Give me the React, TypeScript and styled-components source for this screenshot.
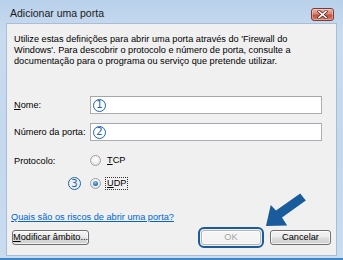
import React from 'react';
import styled, { createGlobalStyle } from 'styled-components';

const Global = createGlobalStyle`
  html, body { margin: 0; padding: 0; width: 343px; height: 260px; overflow: hidden; background: #fff; }
  #root { width: 343px; height: 260px; }
  * { box-sizing: border-box; }
`;

const FS = '9.2px';

const Window = styled.div`
  position: relative;
  width: 343px;
  height: 260px;
  display: flex;
  flex-direction: column;
  background: linear-gradient(180deg, #b8d0ea 0%, #c8dbef 12%, #c4d8ee 60%, #c9dcf0 100%);
  border-bottom: 2px solid #3f86c4;
  font-family: "Liberation Sans", Arial, sans-serif;
  color: #000;
`;

const TitleBar = styled.div`
  height: 23px;
  flex: none;
  display: flex;
  align-items: center;
  justify-content: space-between;
  padding: 2px 9px 0 10px;
`;

const Title = styled.span`
  font-size: 10.5px;
  color: #1a1a1a;
`;

const CloseButton = styled.div`
  width: 23px;
  height: 13px;
  margin-top: 4px;
  border: 1px solid #7a3a35;
  border-radius: 3px;
  background: linear-gradient(180deg, #eab0a2 0%, #d98676 45%, #c4503d 55%, #d77a63 100%);
  display: flex;
  align-items: center;
  justify-content: center;
  box-shadow: inset 0 0 0 1px rgba(255, 255, 255, 0.35);
`;

const Content = styled.div`
  position: relative;
  flex: 1;
  margin: 0 6px 2px 6px;
  background: #f0f0f0;
  border: 1px solid #a9bed6;
  padding: 10px 5px 0 4px;
  display: flex;
  flex-direction: column;
  font-size: ${FS};
`;

const Description = styled.p`
  margin: 0 0 0 3px;
  line-height: 11px;
  font-size: ${FS};
`;

const FormGrid = styled.div`
  display: grid;
  grid-template-columns: 76px 232px;
  row-gap: 9px;
  margin: 29px 0 0 3px;
  align-items: center;
`;

const Label = styled.span`
  font-size: ${FS};
  white-space: nowrap;
`;

const Key = styled.span`
  text-decoration: underline;
`;

const TextBox = styled.div`
  height: 18px;
  background: #fff;
  border: 1px solid #abadb3;
  border-top-color: #a3a6ad;
  display: flex;
  align-items: center;
  padding-left: 2px;
`;

const Marker = styled.span`
  width: 13px;
  height: 13px;
  border: 1.4px solid #1c64b0;
  border-radius: 50%;
  color: #1c64b0;
  font-size: 10px;
  line-height: 10px;
  display: inline-flex;
  align-items: center;
  justify-content: center;
  font-family: "DejaVu Sans", sans-serif;
`;

const ProtoGrid = styled.div`
  display: grid;
  grid-template-columns: 76px 1fr;
  grid-auto-rows: 23px;
  margin: 8px 0 0 3px;
  align-items: center;
`;

const MarkerCell = styled.div`
  justify-self: end;
  margin-right: 9px;
  display: flex;
`;

const RadioRow = styled.label`
  display: flex;
  align-items: center;
  gap: 4px;
  font-size: ${FS};
`;

const Radio = styled.span<{ $checked?: boolean }>`
  width: 11px;
  height: 11px;
  border-radius: 50%;
  border: 1px solid #a0a0a0;
  background: radial-gradient(circle at 50% 35%, #ffffff 0%, #f2f2f2 45%, #d6d6d6 100%);
  display: flex;
  align-items: center;
  justify-content: center;
  &::after {
    content: '';
    display: ${p => (p.$checked ? 'block' : 'none')};
    width: 5px;
    height: 5px;
    border-radius: 50%;
    background: radial-gradient(circle at 45% 35%, #8ec6f2 0%, #2a74c0 60%, #1b4f8c 100%);
  }
`;

const RadioText = styled.span<{ $focused?: boolean }>`
  padding: 0 1px;
  border: 1px ${p => (p.$focused ? 'dotted #333' : 'solid transparent')};
  line-height: 11px;
`;

const Link = styled.a`
  margin: 17px 0 0 0;
  color: #0066cc;
  text-decoration: underline;
  font-size: ${FS};
  line-height: 11px;
  align-self: flex-start;
`;

const ButtonRow = styled.div`
  display: flex;
  justify-content: space-between;
  align-items: center;
  margin: 7px 0 0 1px;
`;

const Buttons = styled.div`
  display: flex;
  gap: 9px;
  align-items: center;
`;

const Button = styled.button<{ $w: number; $highlight?: boolean; $disabled?: boolean }>`
  width: ${p => p.$w}px;
  height: 15px;
  padding: 0;
  white-space: nowrap;
  border: 1px solid #707070;
  border-radius: 3px;
  background: linear-gradient(180deg, #f4f4f4 0%, #ebebeb 48%, #dddddd 52%, #cfcfcf 100%);
  box-shadow: inset 0 0 0 1px rgba(255, 255, 255, 0.7);
  font-family: "Liberation Sans", Arial, sans-serif;
  font-size: ${FS};
  line-height: 13px;
  color: ${p => (p.$disabled ? '#a3a3a3' : '#000')};
  ${p =>
    p.$highlight &&
    `
    border-color: #b5b5b5;
    background: linear-gradient(180deg, #f6f6f6 0%, #f2f2f2 100%);
    outline: 2px solid #1a5b9c;
    outline-offset: 1px;
  `}
`;

const ArrowSvg = styled.svg`
  position: absolute;
  left: 256px;
  top: 165px;
  pointer-events: none;
`;

export default function App() {
  return (
    <>
      <Global />
      <Window>
        <TitleBar>
          <Title>Adicionar uma porta</Title>
          <CloseButton>
            <svg width="11" height="9" viewBox="0 0 11 9">
              <path d="M2 1.5 L9 7.5 M9 1.5 L2 7.5" stroke="#5a2a25" strokeWidth="3" strokeLinecap="square" />
              <path d="M2 1.5 L9 7.5 M9 1.5 L2 7.5" stroke="#ffffff" strokeWidth="1.6" strokeLinecap="square" />
            </svg>
          </CloseButton>
        </TitleBar>
        <Content>
          <Description>
            Utilize estas definições para abrir uma porta através do 'Firewall do
            <br />
            Windows'. Para descobrir o protocolo e número de porta, consulte a
            <br />
            documentação para o programa ou serviço que pretende utilizar.
          </Description>
          <FormGrid>
            <Label>
              <Key>N</Key>ome:
            </Label>
            <TextBox>
              <Marker>1</Marker>
            </TextBox>
            <Label>Número da porta:</Label>
            <TextBox>
              <Marker>2</Marker>
            </TextBox>
          </FormGrid>
          <ProtoGrid>
            <Label>Protocolo:</Label>
            <RadioRow>
              <Radio />
              <RadioText>
                <Key>T</Key>CP
              </RadioText>
            </RadioRow>
            <MarkerCell>
              <Marker>3</Marker>
            </MarkerCell>
            <RadioRow>
              <Radio $checked />
              <RadioText $focused>
                <Key>U</Key>DP
              </RadioText>
            </RadioRow>
          </ProtoGrid>
          <Link href="#">Quais são os riscos de abrir uma porta?</Link>
          <ButtonRow>
            <Button $w={77}>
              <Key>M</Key>odificar âmbito...
            </Button>
            <Buttons>
              <Button $w={60} $highlight $disabled>
                OK
              </Button>
              <Button $w={61}>Cancelar</Button>
            </Buttons>
          </ButtonRow>
          <ArrowSvg width="60" height="55" viewBox="256 165 60 55">
            <polygon
              points="259,202 263.7,181 269,186.5 293.2,169.4 298.8,176.6 275,193.5 280.2,201.5"
              fill="#1a5b9c"
            />
          </ArrowSvg>
        </Content>
      </Window>
    </>
  );
}
